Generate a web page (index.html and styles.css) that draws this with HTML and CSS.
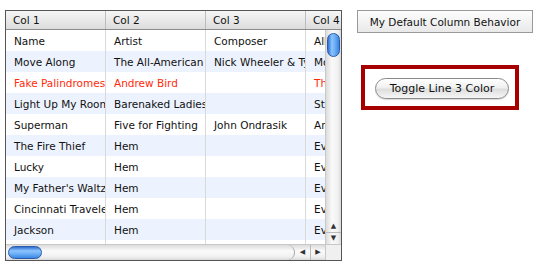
FILE: index.html
```html
<!DOCTYPE html>
<html lang="en">
<head>
    <meta charset="UTF-8">
    <title>Table Column Behavior</title>
    <link rel="stylesheet" href="styles.css">
</head>
<body>
    <div class="page">
        <div class="grid">
            <div class="row head">
                <div class="cell">Col 1</div>
                <div class="cell">Col 2</div>
                <div class="cell">Col 3</div>
                <div class="cell">Col 4</div>
            </div>
            <div class="view">
                <div class="content">
                    <div class="row">
                        <div class="cell">Name</div>
                        <div class="cell">Artist</div>
                        <div class="cell">Composer</div>
                        <div class="cell">Album</div>
                    </div>
                    <div class="row alt">
                        <div class="cell">Move Along</div>
                        <div class="cell">The All-American Rejects</div>
                        <div class="cell">Nick Wheeler &amp; Tyson Ritter</div>
                        <div class="cell">Move Along</div>
                    </div>
                    <div class="row red">
                        <div class="cell">Fake Palindromes</div>
                        <div class="cell">Andrew Bird</div>
                        <div class="cell"></div>
                        <div class="cell">The Mysterious Production of Eggs</div>
                    </div>
                    <div class="row alt">
                        <div class="cell">Light Up My Room</div>
                        <div class="cell">Barenaked Ladies</div>
                        <div class="cell"></div>
                        <div class="cell">Stunt</div>
                    </div>
                    <div class="row">
                        <div class="cell">Superman</div>
                        <div class="cell">Five for Fighting</div>
                        <div class="cell">John Ondrasik</div>
                        <div class="cell">America Town</div>
                    </div>
                    <div class="row alt">
                        <div class="cell">The Fire Thief</div>
                        <div class="cell">Hem</div>
                        <div class="cell"></div>
                        <div class="cell">Eveningland</div>
                    </div>
                    <div class="row">
                        <div class="cell">Lucky</div>
                        <div class="cell">Hem</div>
                        <div class="cell"></div>
                        <div class="cell">Eveningland</div>
                    </div>
                    <div class="row alt">
                        <div class="cell">My Father's Waltz</div>
                        <div class="cell">Hem</div>
                        <div class="cell"></div>
                        <div class="cell">Eveningland</div>
                    </div>
                    <div class="row">
                        <div class="cell">Cincinnati Traveler</div>
                        <div class="cell">Hem</div>
                        <div class="cell"></div>
                        <div class="cell">Eveningland</div>
                    </div>
                    <div class="row alt">
                        <div class="cell">Jackson</div>
                        <div class="cell">Hem</div>
                        <div class="cell"></div>
                        <div class="cell">Eveningland</div>
                    </div>
                    <div class="row">
                        <div class="cell"></div>
                        <div class="cell"></div>
                        <div class="cell"></div>
                        <div class="cell"></div>
                    </div>
                </div>
                <div class="vscroll">
                    <div class="vtrack">
                        <div class="vthumb"></div>
                    </div>
                    <div class="varrow">&#9650;</div>
                    <div class="varrow down">&#9660;</div>
                </div>
            </div>
            <div class="hscroll">
                <div class="htrack">
                    <div class="hthumb"></div>
                </div>
                <div class="harrow">&#9664;</div>
                <div class="harrow right">&#9654;</div>
                <div class="corner"></div>
            </div>
        </div>

        <div class="side">
            <button class="plain">My Default Column Behavior</button>
            <div class="highlight">
                <button class="aqua">Toggle Line 3 Color</button>
            </div>
        </div>
    </div>
</body>
</html>
```

FILE: styles.css
```css
* {
    margin: 0;
    padding: 0;
    box-sizing: border-box;
}

body {
    background: white;
    font-family: "DejaVu Sans", sans-serif;
    font-size: 10.5px;
    color: #111;
}

.page {
    display: flex;
    align-items: flex-start;
    padding: 10px 0 0 5px;
}

/* table */
.grid {
    width: 337px;
    border: 1px solid #555;
}

.view {
    display: flex;
    height: 214px;
}

.content {
    width: 319px;
    overflow: hidden;
}

.row {
    display: flex;
    height: 21px;
}

.row.alt {
    background: #edf3fe;
}

.row.red {
    color: #ff2a0a;
}

.cell {
    flex: none;
    width: 100px;
    padding: 1px 0 0 8px;
    line-height: 20px;
    white-space: nowrap;
    overflow: hidden;
    border-right: 1px solid #d9d9d9;
}

.row.head {
    height: 19px;
    overflow: hidden;
    background: linear-gradient(#f6f6f6, #dcdcdc);
    border-bottom: 1px solid #8c8c8c;
}

.row.head .cell {
    line-height: 18px;
    padding: 0 0 0 7px;
    border-right-color: #bdbdbd;
}

/* vertical scroller */
.vscroll {
    width: 16px;
    display: flex;
    flex-direction: column;
    background: linear-gradient(90deg, #dcdcdc, #fafafa 40%, #f0f0f0 80%, #d8d8d8);
    border-left: 1px solid #c8c8c8;
}

.vtrack {
    flex: 1;
    padding: 3px 1px 0 1px;
}

.vthumb {
    height: 24px;
    border-radius: 7px;
    border: 1px solid #2a5aa8;
    background: linear-gradient(90deg, #2f6fd0, #8cc4ff 35%, #6fb0f6 60%, #3a86e4);
}

.varrow {
    height: 11px;
    font-size: 7px;
    line-height: 11px;
    text-align: center;
    color: #333;
}

.varrow.down {
    border-top: 1px solid #bbb;
    margin-bottom: 1px;
}

/* horizontal scroller */
.hscroll {
    display: flex;
    height: 16px;
    background: linear-gradient(#dcdcdc, #fafafa 40%, #f0f0f0 80%, #d8d8d8);
    border-top: 1px solid #c8c8c8;
}

.htrack {
    width: 289px;
    padding: 1px 0 0 2px;
    border-right: 1px solid #aaa;
    border-radius: 0 8px 8px 0;
}

.hthumb {
    width: 34px;
    height: 13px;
    border-radius: 7px;
    border: 1px solid #2a5aa8;
    background: linear-gradient(#2f6fd0, #8cc4ff 35%, #6fb0f6 60%, #3a86e4);
}

.harrow {
    width: 15px;
    font-size: 7px;
    line-height: 15px;
    text-align: center;
    color: #333;
}

.harrow.right {
    border-left: 1px solid #bbb;
}

.corner {
    flex: 1;
    background: #f0f0f0;
    border-left: 1px solid #c8c8c8;
}

/* buttons */
.side {
    display: flex;
    flex-direction: column;
    align-items: flex-start;
    margin-left: 15px;
}

button {
    font-family: "DejaVu Sans", sans-serif;
    font-size: 10.5px;
    color: #111;
    cursor: pointer;
}

.plain {
    width: 176px;
    height: 23px;
    border: 1px solid #999;
    background: linear-gradient(#fdfdfd, #e9e9e9);
}

.highlight {
    margin: 32px 0 0 4px;
    width: 158px;
    height: 45px;
    border: 4px solid #a70000;
    padding: 9px 0 0 10px;
}

.aqua {
    width: 134px;
    height: 21px;
    font-size: 11px;
    border-radius: 11px;
    border: 1px solid #8a8a8a;
    background: linear-gradient(#ffffff, #f0f0f0 45%, #dedede 55%, #f6f6f6);
    box-shadow: 0 1px 1px rgba(0, 0, 0, 0.15);
}
```
